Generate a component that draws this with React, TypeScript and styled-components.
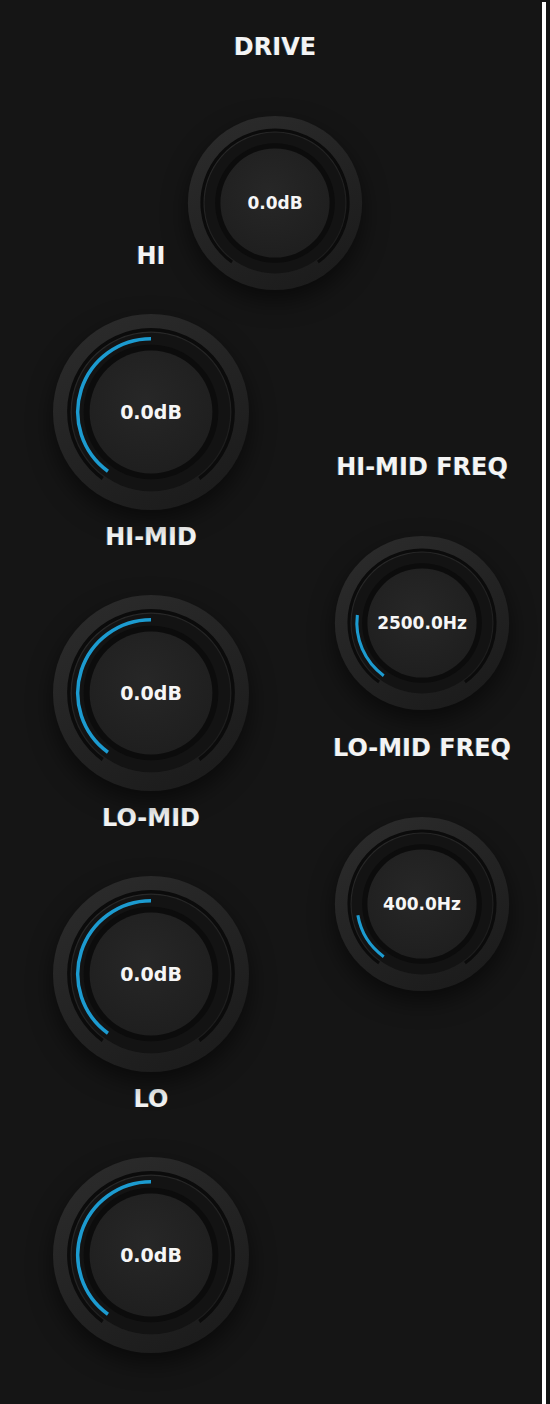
import React from 'react';
import styled, { createGlobalStyle } from 'styled-components';

const GlobalStyle = createGlobalStyle`
  body {
    margin: 0;
    background: #151515;
    font-family: 'DejaVu Sans', 'Liberation Sans', sans-serif;
  }
`;

const Screen = styled.div`
  display: flex;
  min-height: 100vh;
  background: #151515;
`;

const Panel = styled.div`
  width: 542px;
  display: flex;
  flex-direction: column;
`;

const Edge = styled.div`
  width: 4px;
  margin-top: 2px;
  background: #ffffff;
`;

const DriveRow = styled.div`
  display: flex;
  justify-content: center;
  padding: 32px 0 0 8px;
`;

const Columns = styled.div`
  display: grid;
  grid-template-columns: 302px 240px;
  margin-top: -72px;
`;

const Column = styled.div<{ $offset: number }>`
  display: flex;
  flex-direction: column;
  align-items: center;
  padding-top: ${(p) => p.$offset}px;
`;

const Control = styled.div`
  display: flex;
  flex-direction: column;
  align-items: center;
`;

const Label = styled.div`
  height: 30px;
  line-height: 30px;
  font-size: 24px;
  font-weight: bold;
  color: #f4f4f4;
  white-space: nowrap;
  text-shadow: -1px 0 0 rgba(90, 170, 200, 0.3);
`;

const KnobBox = styled.div`
  width: 198px;
  height: 198px;
  margin: 42px 0 11px;
  display: grid;
  place-items: center;
  & > * {
    grid-area: 1 / 1;
  }
`;

const Dial = styled.svg`
  filter: drop-shadow(0 10px 12px rgba(0, 0, 0, 0.55));
`;

const Value = styled.span<{ $size: number }>`
  position: relative;
  z-index: 1;
  font-size: ${(p) => p.$size}px;
  font-weight: bold;
  color: #f6f6f6;
  white-space: nowrap;
`;

const START = -144;
const END = 144;

const pt = (r: number, deg: number) => {
  const a = (deg * Math.PI) / 180;
  return `${(100 + r * Math.sin(a)).toFixed(2)} ${(100 - r * Math.cos(a)).toFixed(2)}`;
};

const arc = (r: number, from: number, to: number) =>
  `M ${pt(r, from)} A ${r} ${r} 0 ${to - from > 180 ? 1 : 0} 1 ${pt(r, to)}`;

type KnobProps = { label: string; value: string; size: number; angle?: number };

const Knob = ({ label, value, size, angle }: KnobProps) => (
  <Control>
    <Label>{label}</Label>
    <KnobBox>
      <Dial width={size} height={size} viewBox="0 0 200 200">
        <defs>
          <linearGradient id="bezel" x1="0.2" y1="0" x2="0.8" y2="1">
            <stop offset="0" stopColor="#2b2b2b" />
            <stop offset="1" stopColor="#1b1b1b" />
          </linearGradient>
          <radialGradient id="face" cx="0.45" cy="0.4" r="0.65">
            <stop offset="0" stopColor="#272727" />
            <stop offset="1" stopColor="#1e1e1e" />
          </radialGradient>
        </defs>
        <circle cx="100" cy="100" r="99" fill="url(#bezel)" />
        <circle cx="100" cy="100" r="80" fill="#131313" />
        <path d={arc(83, START, END)} stroke="#0b0b0b" strokeWidth="3.5" fill="none" />
        <circle cx="100" cy="100" r="68" fill="#0c0c0c" />
        {angle !== undefined && (
          <path d={arc(74, START, angle)} stroke="#1c9bd0" strokeWidth="3.5" fill="none" />
        )}
        <circle cx="100" cy="100" r="62" fill="url(#face)" />
      </Dial>
      <Value $size={Math.round(size * 0.097)}>{value}</Value>
    </KnobBox>
  </Control>
);

const App = () => {
  return (
    <Screen>
      <GlobalStyle />
      <Panel>
        <DriveRow>
          <Knob label="DRIVE" value="0.0dB" size={176} />
        </DriveRow>
        <Columns>
          <Column $offset={0}>
            <Knob label="HI" value="0.0dB" size={198} angle={0} />
            <Knob label="HI-MID" value="0.0dB" size={198} angle={0} />
            <Knob label="LO-MID" value="0.0dB" size={198} angle={0} />
            <Knob label="LO" value="0.0dB" size={198} angle={0} />
          </Column>
          <Column $offset={211}>
            <Knob label="HI-MID FREQ" value="2500.0Hz" size={176} angle={-83} />
            <Knob label="LO-MID FREQ" value="400.0Hz" size={176} angle={-100} />
          </Column>
        </Columns>
      </Panel>
      <Edge />
    </Screen>
  );
};

export default App;
